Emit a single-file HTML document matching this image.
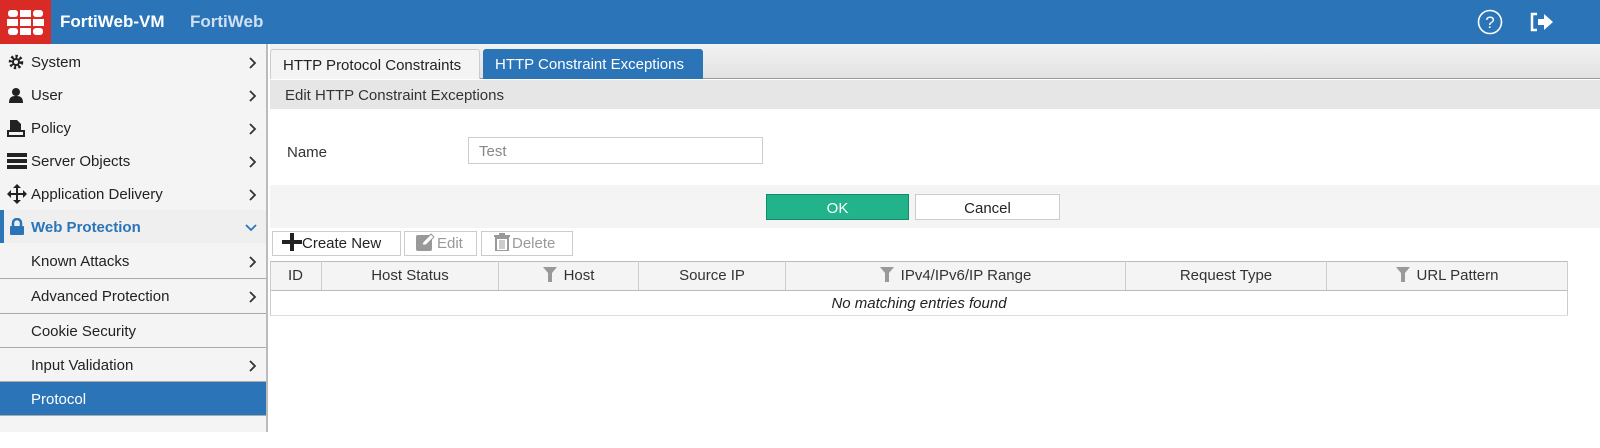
<!DOCTYPE html><html><head><style>
*{box-sizing:border-box;margin:0;padding:0}
body{width:1600px;height:432px;overflow:hidden;background:#fff;font-family:"Liberation Sans",sans-serif;font-size:15px;color:#333;position:relative}
.a{position:absolute}
.top{left:0;top:0;width:1600px;height:44px;background:#2b74b8}
.logo{left:0;top:0;width:51px;height:44px;background:#da2a25}
.nav{left:0;top:44px;width:268px;height:388px;background:#f4f4f4;border-right:2px solid #bbb}
.it{position:absolute;left:0;width:266px;height:33px;line-height:35px;font-size:15px;color:#222}
.it .t{position:absolute;left:31px}
.it .c{position:absolute;left:249px;top:12px}
.sub{border-top:1px solid #aaa}
.tab{top:49px;height:30px;line-height:31px;font-size:15px;padding-left:12px;border-radius:3px 3px 0 0}
.btn{height:25px;top:231px;border:1px solid #ccc;background:#fff;line-height:24px;font-size:15px}
.hd{top:261px;height:29px;line-height:30px;text-align:center;border-right:1px solid #ccc;font-size:15px}
.fl{display:inline-block;margin-right:7px;vertical-align:-2px}
</style></head><body>
<div class="a top"></div>
<div class="a logo"><svg width="51" height="44"><g fill="#fff"><rect x="8" y="10" width="10" height="7" rx="3"/><rect x="20" y="10" width="11" height="7"/><rect x="33" y="10" width="10" height="7" rx="3"/><rect x="7" y="19" width="11" height="7"/><rect x="20" y="19" width="11" height="7"/><rect x="33" y="19" width="11" height="7"/><rect x="8" y="28" width="10" height="7" rx="3"/><rect x="20" y="28" width="11" height="7"/><rect x="33" y="28" width="10" height="7" rx="3"/></g></svg></div>
<div class="a" style="left:60px;top:12px;color:#fff;font-size:17px;font-weight:bold">FortiWeb-VM</div>
<div class="a" style="left:190px;top:12px;color:#cfe0f2;font-size:17px;font-weight:bold">FortiWeb</div>
<svg class="a" style="left:1477px;top:9px" width="26" height="26"><circle cx="13" cy="13" r="11.5" fill="none" stroke="#fff" stroke-width="1.6"/><text x="13" y="19" text-anchor="middle" fill="#fff" font-size="17" font-family="Liberation Sans">?</text></svg>
<svg class="a" style="left:1529px;top:12px" width="26" height="20"><path d="M8 2H3v16h5" fill="none" stroke="#fff" stroke-width="2.5"/><path d="M9 7h6V2l9 8-9 8v-5H9z" fill="#fff"/></svg>

<div class="a nav">
<div class="it" style="top:1px"><svg class="a" style="left:8px;top:9px" width="16" height="16"><circle cx="8" cy="8" r="5.5" fill="none" stroke="#222" stroke-width="3.5" stroke-dasharray="2.2 2"/><circle cx="8" cy="8" r="4" fill="#222"/><circle cx="8" cy="8" r="2" fill="#f4f4f4"/></svg><span class="t">System</span><svg class="c" width="8" height="12"><path d="M1 1l5 5-5 5" fill="none" stroke="#333" stroke-width="1.8"/></svg></div>
<div class="it" style="top:34px"><svg class="a" style="left:8px;top:9px" width="16" height="16"><circle cx="8" cy="5" r="4" fill="#222"/><path d="M1 16c0-6 3-7 7-7s7 1 7 7z" fill="#222"/></svg><span class="t">User</span><svg class="c" width="8" height="12"><path d="M1 1l5 5-5 5" fill="none" stroke="#333" stroke-width="1.8"/></svg></div>
<div class="it" style="top:67px"><svg class="a" style="left:7px;top:8px" width="18" height="18"><path d="M3 1h7l4 4v7H3z" fill="#222"/><rect x="1" y="12" width="16" height="5" fill="none" stroke="#222" stroke-width="2"/></svg><span class="t">Policy</span><svg class="c" width="8" height="12"><path d="M1 1l5 5-5 5" fill="none" stroke="#333" stroke-width="1.8"/></svg></div>
<div class="it" style="top:100px"><svg class="a" style="left:7px;top:9px" width="20" height="16"><rect x="0" y="0" width="20" height="4" fill="#222"/><rect x="0" y="6" width="20" height="4" fill="#222"/><rect x="0" y="12" width="20" height="4" fill="#222"/></svg><span class="t">Server Objects</span><svg class="c" width="8" height="12"><path d="M1 1l5 5-5 5" fill="none" stroke="#333" stroke-width="1.8"/></svg></div>
<div class="it" style="top:133px"><svg class="a" style="left:7px;top:7px" width="20" height="20"><path d="M10 0l4 4h-3v5h5V6l4 4-4 4v-3h-5v5h3l-4 4-4-4h3v-5H4v3L0 10l4-4v3h5V4H6z" fill="#222"/></svg><span class="t">Application Delivery</span><svg class="c" width="8" height="12"><path d="M1 1l5 5-5 5" fill="none" stroke="#333" stroke-width="1.8"/></svg></div>
<div class="it" style="top:166px;background:#efefef"><div class="a" style="left:0;top:0;width:4px;height:33px;background:#2b74b8"></div><svg class="a" style="left:10px;top:8px" width="14" height="17"><path d="M3 8V5a4 4 0 0 1 8 0v3" fill="none" stroke="#2b74b8" stroke-width="2.5"/><rect x="0" y="8" width="14" height="9" rx="1" fill="#2b74b8"/></svg><span class="t" style="color:#2b74b8;font-weight:bold">Web Protection</span><svg class="c" style="left:245px;top:14px" width="12" height="8"><path d="M1 1l5 5 5-5" fill="none" stroke="#2b74b8" stroke-width="1.8"/></svg></div>
<div class="it" style="top:200px"><span class="t">Known Attacks</span><svg class="c" width="8" height="12"><path d="M1 1l5 5-5 5" fill="none" stroke="#333" stroke-width="1.8"/></svg></div>
<div class="it sub" style="top:234px"><span class="t">Advanced Protection</span><svg class="c" width="8" height="12"><path d="M1 1l5 5-5 5" fill="none" stroke="#333" stroke-width="1.8"/></svg></div>
<div class="it sub" style="top:269px"><span class="t">Cookie Security</span></div>
<div class="it sub" style="top:303px"><span class="t">Input Validation</span><svg class="c" width="8" height="12"><path d="M1 1l5 5-5 5" fill="none" stroke="#333" stroke-width="1.8"/></svg></div>
<div class="it sub" style="top:337px;background:#2b74b8;color:#fff;height:34px"><span class="t">Protocol</span></div>
<div class="it sub" style="top:371px"></div>
</div>

<div class="a" style="left:270px;top:44px;width:1330px;height:35px;background:linear-gradient(#f2f2f2,#e2e2e2);border-bottom:1px solid #999"></div>
<div class="a tab" style="left:270px;width:210px;background:#f4f4f4;border:1px solid #ccc;border-bottom:none;color:#222">HTTP Protocol Constraints</div>
<div class="a tab" style="left:483px;width:220px;background:#2b74b8;color:#fff">HTTP Constraint Exceptions</div>
<div class="a" style="left:270px;top:80px;width:1330px;height:29px;background:#e6e6e6;line-height:31px;padding-left:15px;color:#333">Edit HTTP Constraint Exceptions</div>
<div class="a" style="left:287px;top:144px;color:#333">Name</div>
<div class="a" style="left:468px;top:137px;width:295px;height:27px;border:1px solid #ccc;line-height:27px;padding-left:10px;color:#888">Test</div>
<div class="a" style="left:270px;top:185px;width:1330px;height:43px;background:#f4f4f4"></div>
<div class="a" style="left:766px;top:194px;width:143px;height:26px;background:#22b38b;border:1px solid #138a6a;color:#fff;text-align:center;line-height:27px">OK</div>
<div class="a" style="left:915px;top:194px;width:145px;height:26px;background:#fff;border:1px solid #ccc;text-align:center;line-height:27px;color:#222">Cancel</div>

<div class="a btn" style="left:272px;width:129px;color:#222;padding-left:9px"><svg style="vertical-align:-3px" width="20" height="18"><path d="M8 0h4v7h8v4h-8v7H8v-7H0V7h8z" fill="#222"/></svg>Create New</div>
<div class="a btn" style="left:404px;width:73px;color:#999;padding-left:10px"><svg style="vertical-align:-3px" width="22" height="18"><rect x="1" y="2" width="16" height="16" rx="2" fill="#999"/><path d="M7 12l1-3 8-8 3 3-8 8z" fill="#fff" stroke="#999" stroke-width="1"/></svg>Edit</div>
<div class="a btn" style="left:481px;width:92px;color:#999;padding-left:11px"><svg style="vertical-align:-3px" width="19" height="18"><rect x="1" y="2" width="16" height="2" fill="#999"/><rect x="6" y="0" width="6" height="3" fill="#999"/><rect x="3" y="5" width="12" height="13" fill="none" stroke="#999" stroke-width="2"/><path d="M7 7v9M9 7v9M11 7v9" stroke="#999"/></svg>Delete</div>

<div class="a" style="left:270px;top:261px;width:1298px;height:30px;background:#f4f4f4;border-top:1px solid #bbb;border-bottom:1px solid #bbb"></div>
<div class="a" style="left:270px;top:261px;width:1298px;height:55px;border-left:1px solid #ccc;border-right:1px solid #ccc"></div>
<div class="a hd" style="left:270px;width:52px">ID</div>
<div class="a hd" style="left:322px;width:177px">Host Status</div>
<div class="a hd" style="left:499px;width:140px"><svg class="fl" width="14" height="15"><path d="M0 0h14L9 6v9H5V6z" fill="#999"/></svg>Host</div>
<div class="a hd" style="left:639px;width:147px">Source IP</div>
<div class="a hd" style="left:786px;width:340px"><svg class="fl" width="14" height="15"><path d="M0 0h14L9 6v9H5V6z" fill="#999"/></svg>IPv4/IPv6/IP Range</div>
<div class="a hd" style="left:1126px;width:201px">Request Type</div>
<div class="a hd" style="left:1327px;width:240px;border-right:none"><svg class="fl" width="14" height="15"><path d="M0 0h14L9 6v9H5V6z" fill="#999"/></svg>URL Pattern</div>
<div class="a" style="left:270px;top:291px;width:1298px;height:25px;border-bottom:1px solid #ddd;text-align:center;line-height:25px;font-style:italic;color:#222">No matching entries found</div>
</body></html>
